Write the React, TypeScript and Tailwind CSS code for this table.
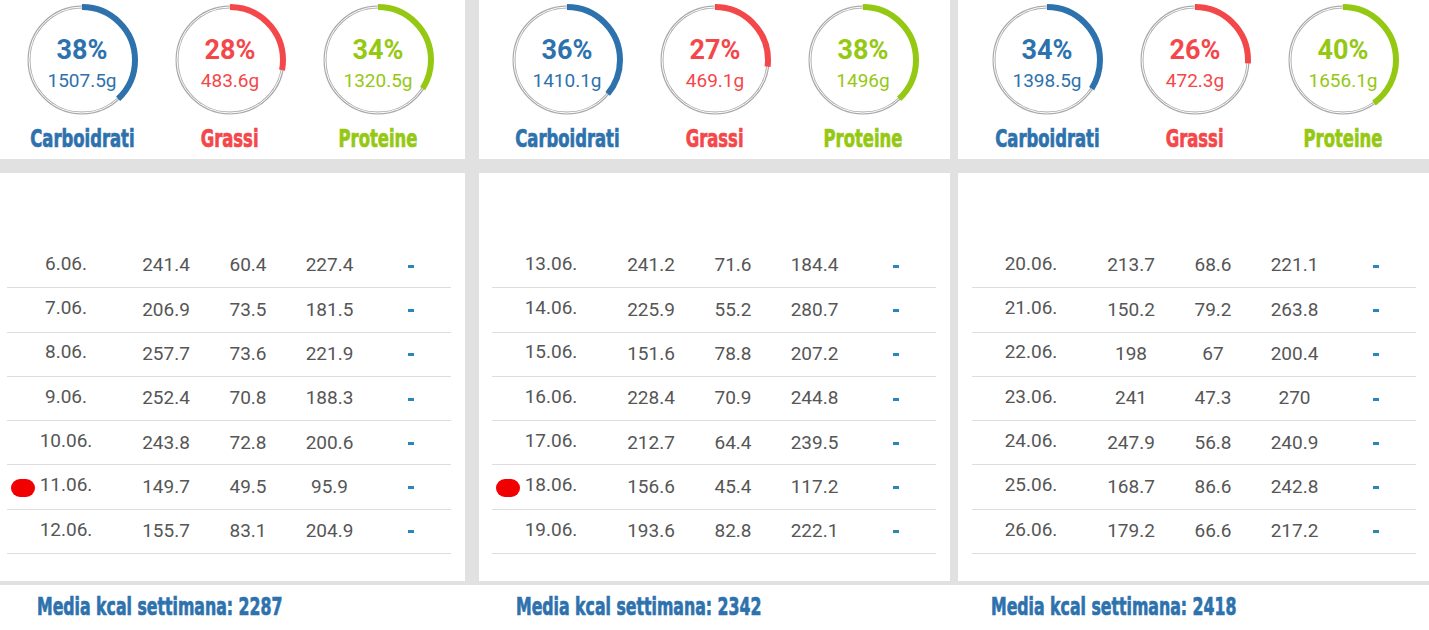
import React from "react";

type Macro = { pct: number; grams: string };
type Row = { date: string; c: string; f: string; p: string; dot?: boolean };
type Week = {
  ringPad: string;
  tablePad: string;
  footPad: string;
  width: string;
  carbs: Macro;
  fats: Macro;
  prot: Macro;
  rows: Row[];
  avg: number;
};

const BLUE = "#2d72ad";
const RED = "#f4474a";
const GREEN = "#95c813";

const weeks: Week[] = [
  {
    ringPad: "pl-[8px]",
    tablePad: "pl-[7px]",
    footPad: "pl-[37px]",
    width: "w-[465px]",
    carbs: { pct: 38, grams: "1507.5g" },
    fats: { pct: 28, grams: "483.6g" },
    prot: { pct: 34, grams: "1320.5g" },
    rows: [
      { date: "6.06.", c: "241.4", f: "60.4", p: "227.4" },
      { date: "7.06.", c: "206.9", f: "73.5", p: "181.5" },
      { date: "8.06.", c: "257.7", f: "73.6", p: "221.9" },
      { date: "9.06.", c: "252.4", f: "70.8", p: "188.3" },
      { date: "10.06.", c: "243.8", f: "72.8", p: "200.6" },
      { date: "11.06.", c: "149.7", f: "49.5", p: "95.9", dot: true },
      { date: "12.06.", c: "155.7", f: "83.1", p: "204.9" },
    ],
    avg: 2287,
  },
  {
    ringPad: "pl-[14px]",
    tablePad: "pl-[13px]",
    footPad: "pl-[37px]",
    width: "w-[471px]",
    carbs: { pct: 36, grams: "1410.1g" },
    fats: { pct: 27, grams: "469.1g" },
    prot: { pct: 38, grams: "1496g" },
    rows: [
      { date: "13.06.", c: "241.2", f: "71.6", p: "184.4" },
      { date: "14.06.", c: "225.9", f: "55.2", p: "280.7" },
      { date: "15.06.", c: "151.6", f: "78.8", p: "207.2" },
      { date: "16.06.", c: "228.4", f: "70.9", p: "244.8" },
      { date: "17.06.", c: "212.7", f: "64.4", p: "239.5" },
      { date: "18.06.", c: "156.6", f: "45.4", p: "117.2", dot: true },
      { date: "19.06.", c: "193.6", f: "82.8", p: "222.1" },
    ],
    avg: 2342,
  },
  {
    ringPad: "pl-[15px]",
    tablePad: "pl-[14px]",
    footPad: "pl-[33px]",
    width: "w-[471px]",
    carbs: { pct: 34, grams: "1398.5g" },
    fats: { pct: 26, grams: "472.3g" },
    prot: { pct: 40, grams: "1656.1g" },
    rows: [
      { date: "20.06.", c: "213.7", f: "68.6", p: "221.1" },
      { date: "21.06.", c: "150.2", f: "79.2", p: "263.8" },
      { date: "22.06.", c: "198", f: "67", p: "200.4" },
      { date: "23.06.", c: "241", f: "47.3", p: "270" },
      { date: "24.06.", c: "247.9", f: "56.8", p: "240.9" },
      { date: "25.06.", c: "168.7", f: "86.6", p: "242.8" },
      { date: "26.06.", c: "179.2", f: "66.6", p: "217.2" },
    ],
    avg: 2418,
  },
];

// no Impact here: squeeze the condensed DejaVu and thicken it a bit
const heavy =
  "inline-block font-['DejaVu_Sans_Condensed','DejaVu_Sans',sans-serif] font-bold [-webkit-text-stroke:0.7px_currentColor]";

function Ring({ macro, color, label }: { macro: Macro; color: string; label: string }) {
  const r = 53;
  const circ = 2 * Math.PI * r;
  return (
    <div className="flex flex-col items-center">
      <div className="relative w-[116px] h-[116px] mt-[2px]">
        <svg width="116" height="116" viewBox="0 0 116 116" className="absolute inset-0">
          <circle cx="58" cy="58" r={r} fill="none" stroke="#a9a9a9" strokeWidth="3" />
          <circle cx="58" cy="58" r={r} fill="none" stroke="#ffffff" strokeWidth="1" />
          <circle
            cx="58"
            cy="58"
            r={r}
            fill="none"
            stroke={color}
            strokeWidth="6"
            strokeDasharray={`${(macro.pct / 100) * circ} ${circ}`}
            transform="rotate(-90 58 58)"
          />
        </svg>
        <div className="absolute inset-0 flex flex-col items-center pt-[33px] font-['Roboto',sans-serif]">
          <span className="text-[27px] font-bold leading-[31px]" style={{ color }}>
            {macro.pct}%
          </span>
          <span className="text-[19px] leading-[24px] mt-[3px]" style={{ color }}>
            {macro.grams}
          </span>
        </div>
      </div>
      <span className={`${heavy} scale-x-[0.73] text-[25px] leading-[26px] mt-[8px]`} style={{ color }}>
        {label}
      </span>
    </div>
  );
}

function Panel({ week }: { week: Week }) {
  return (
    <div className={`${week.width} flex flex-col shrink-0`}>
      <div className={`h-[159px] bg-white grid grid-cols-[148px_148px_148px] ${week.ringPad}`}>
        <Ring macro={week.carbs} color={BLUE} label="Carboidrati" />
        <Ring macro={week.fats} color={RED} label="Grassi" />
        <Ring macro={week.prot} color={GREEN} label="Proteine" />
      </div>
      <div className="h-[14px] bg-[#e1e1e1]" />
      <div className={`h-[408px] bg-white pt-[71px] ${week.tablePad}`}>
        <div className="w-[444px] font-['Roboto',sans-serif] text-[19px] text-[#565656]">
          {week.rows.map((row) => (
            <div
              key={row.date}
              className="relative h-[44.3px] border-b border-[#dddddd] grid grid-cols-[118px_82px_82px_81px_81px] items-center justify-items-center"
            >
              {row.dot && (
                <span className="absolute left-[4px] top-[14px] w-[24px] h-[18px] rounded-full bg-[#f00000]" />
              )}
              <span className="pb-[3px]">{row.date}</span>
              <span>{row.c}</span>
              <span>{row.f}</span>
              <span>{row.p}</span>
              <span className="w-[6px] h-[3px] bg-[#2a86bd] mt-[1px]" />
            </div>
          ))}
        </div>
      </div>
      <div className="h-[4px] bg-[#e1e1e1]" />
      <div className={`pt-[7px] ${week.footPad}`}>
        <span
          className={`${heavy} origin-left scale-x-[0.7] text-[25px] leading-[30px] whitespace-nowrap`}
          style={{ color: BLUE }}
        >
          Media kcal settimana: {week.avg}
        </span>
      </div>
    </div>
  );
}

export default function App() {
  return (
    <div className="w-[1429px] h-[630px] bg-white flex overflow-hidden">
      <Panel week={weeks[0]} />
      <div className="w-[14px] h-[585px] bg-[#e1e1e1] shrink-0" />
      <Panel week={weeks[1]} />
      <div className="w-[8px] h-[585px] bg-[#e1e1e1] shrink-0" />
      <Panel week={weeks[2]} />
    </div>
  );
}
